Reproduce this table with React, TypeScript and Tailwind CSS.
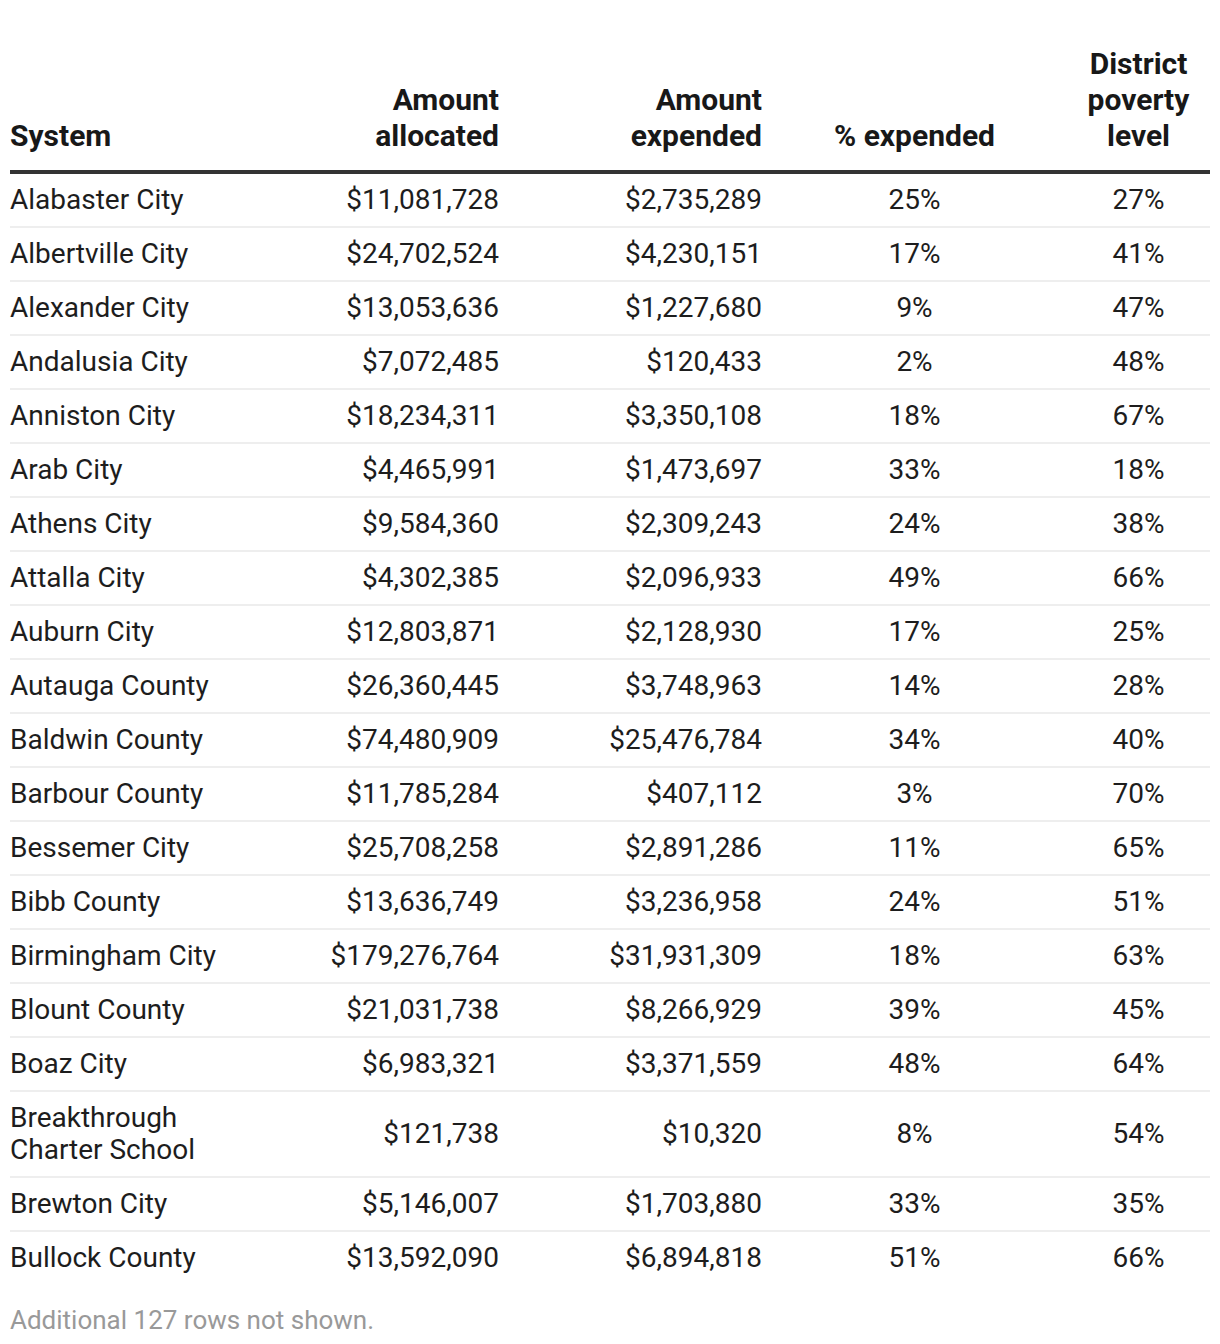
import React from 'react';

type Row = {
  system: string;
  allocated: string;
  expended: string;
  pct: string;
  poverty: string;
};

const rows: Row[] = [
  { system: 'Alabaster City', allocated: '$11,081,728', expended: '$2,735,289', pct: '25%', poverty: '27%' },
  { system: 'Albertville City', allocated: '$24,702,524', expended: '$4,230,151', pct: '17%', poverty: '41%' },
  { system: 'Alexander City', allocated: '$13,053,636', expended: '$1,227,680', pct: '9%', poverty: '47%' },
  { system: 'Andalusia City', allocated: '$7,072,485', expended: '$120,433', pct: '2%', poverty: '48%' },
  { system: 'Anniston City', allocated: '$18,234,311', expended: '$3,350,108', pct: '18%', poverty: '67%' },
  { system: 'Arab City', allocated: '$4,465,991', expended: '$1,473,697', pct: '33%', poverty: '18%' },
  { system: 'Athens City', allocated: '$9,584,360', expended: '$2,309,243', pct: '24%', poverty: '38%' },
  { system: 'Attalla City', allocated: '$4,302,385', expended: '$2,096,933', pct: '49%', poverty: '66%' },
  { system: 'Auburn City', allocated: '$12,803,871', expended: '$2,128,930', pct: '17%', poverty: '25%' },
  { system: 'Autauga County', allocated: '$26,360,445', expended: '$3,748,963', pct: '14%', poverty: '28%' },
  { system: 'Baldwin County', allocated: '$74,480,909', expended: '$25,476,784', pct: '34%', poverty: '40%' },
  { system: 'Barbour County', allocated: '$11,785,284', expended: '$407,112', pct: '3%', poverty: '70%' },
  { system: 'Bessemer City', allocated: '$25,708,258', expended: '$2,891,286', pct: '11%', poverty: '65%' },
  { system: 'Bibb County', allocated: '$13,636,749', expended: '$3,236,958', pct: '24%', poverty: '51%' },
  { system: 'Birmingham City', allocated: '$179,276,764', expended: '$31,931,309', pct: '18%', poverty: '63%' },
  { system: 'Blount County', allocated: '$21,031,738', expended: '$8,266,929', pct: '39%', poverty: '45%' },
  { system: 'Boaz City', allocated: '$6,983,321', expended: '$3,371,559', pct: '48%', poverty: '64%' },
  { system: 'Breakthrough Charter School', allocated: '$121,738', expended: '$10,320', pct: '8%', poverty: '54%' },
  { system: 'Brewton City', allocated: '$5,146,007', expended: '$1,703,880', pct: '33%', poverty: '35%' },
  { system: 'Bullock County', allocated: '$13,592,090', expended: '$6,894,818', pct: '51%', poverty: '66%' },
];

export default function App() {
  return (
    <div className="min-h-screen bg-white px-[10px] pt-[46px] font-['Roboto',sans-serif] text-[#1d1d1d]">
      <table className="w-[1200px] table-fixed border-collapse">
        <colgroup>
          <col className="w-[290px]" />
          <col className="w-[199px]" />
          <col className="w-[263px]" />
          <col className="w-[305px]" />
          <col className="w-[143px]" />
        </colgroup>
        <thead>
          <tr className="border-b-4 border-[#333333] align-bottom text-[30px] font-bold leading-[36px] text-[#181818]">
            <th className="pb-[16px] text-left">System</th>
            <th className="pb-[16px] text-right">
              Amount
              <br />
              allocated
            </th>
            <th className="pb-[16px] text-right">
              Amount
              <br />
              expended
            </th>
            <th className="pb-[16px] text-center">% expended</th>
            <th className="pb-[16px] text-center">
              District
              <br />
              poverty
              <br />
              level
            </th>
          </tr>
        </thead>
        <tbody className="text-[28px] leading-[32px]">
          {rows.map((r, i) => (
            <tr
              key={r.system}
              className={i < rows.length - 1 ? 'border-b-2 border-[#eeeeee] align-middle' : 'align-middle'}
            >
              <td className="py-[10px] pr-[40px] text-left">{r.system}</td>
              <td className="py-[10px] text-right">{r.allocated}</td>
              <td className="py-[10px] text-right">{r.expended}</td>
              <td className="py-[10px] text-center">{r.pct}</td>
              <td className="py-[10px] text-center">{r.poverty}</td>
            </tr>
          ))}
        </tbody>
      </table>
      <p className="mt-[20px] text-[26px] leading-[32px] text-[#999999]">Additional 127 rows not shown.</p>
    </div>
  );
}
